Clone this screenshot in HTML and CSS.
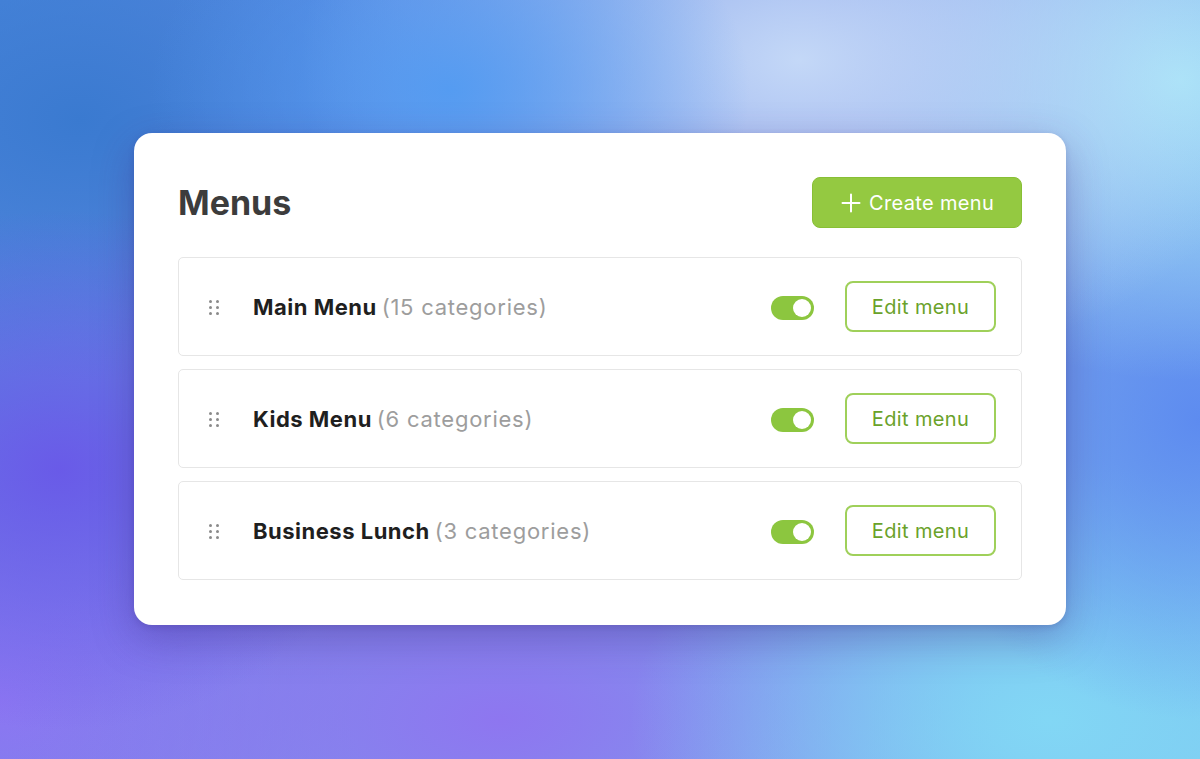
FILE: index.html
```html
<!DOCTYPE html>
<html lang="en">
<head>
<meta charset="utf-8">
<title>Menus</title>
<link rel="stylesheet" href="styles.css">
</head>
<body>
<div class="stage">
  <div class="card">
    <div class="card-header">
      <h1 class="title">Menus</h1>
      <button class="btn-create">
        <svg class="plus" width="20" height="20" viewBox="0 0 20 20"><path d="M10 1.5v17M1.5 10h17" stroke="#fff" stroke-width="2" stroke-linecap="round" fill="none"/></svg>
        <span>Create menu</span>
      </button>
    </div>
    <div class="list">
      <div class="row">
        <span class="handle"><i></i><i></i><i></i><i></i><i></i><i></i></span>
        <span class="name">Main Menu</span><span class="count">(15 categories)</span>
        <span class="toggle"><span class="knob"></span></span>
        <button class="btn-edit">Edit menu</button>
      </div>
      <div class="row">
        <span class="handle"><i></i><i></i><i></i><i></i><i></i><i></i></span>
        <span class="name">Kids Menu</span><span class="count">(6 categories)</span>
        <span class="toggle"><span class="knob"></span></span>
        <button class="btn-edit">Edit menu</button>
      </div>
      <div class="row">
        <span class="handle"><i></i><i></i><i></i><i></i><i></i><i></i></span>
        <span class="name">Business Lunch</span><span class="count">(3 categories)</span>
        <span class="toggle"><span class="knob"></span></span>
        <button class="btn-edit">Edit menu</button>
      </div>
    </div>
  </div>
</div>
</body>
</html>
```

FILE: styles.css
```css
* { box-sizing: border-box; }
html, body { margin: 0; padding: 0; }
body {
  width: 1200px;
  height: 759px;
  overflow: hidden;
  font-family: Inter, "Noto Sans", "Liberation Sans", sans-serif;
}
.stage {
  width: 1200px;
  height: 759px;
  padding-top: 133px;
  padding-left: 134px;
  background:
    radial-gradient(ellipse 320px 260px at 60px 470px, rgba(105,88,232,0.95), rgba(105,88,232,0) 100%),
    radial-gradient(ellipse 300px 220px at 450px 90px, rgba(80,155,242,0.9), rgba(80,155,242,0) 100%),
    radial-gradient(ellipse 500px 320px at 800px 60px, rgba(200,220,248,0.95), rgba(200,220,248,0) 100%),
    radial-gradient(ellipse 360px 300px at 1180px 80px, rgba(165,228,248,1), rgba(165,228,248,0) 100%),
    radial-gradient(ellipse 300px 300px at 1200px 420px, rgba(90,135,240,0.9), rgba(90,135,240,0) 100%),
    radial-gradient(ellipse 420px 260px at 1050px 720px, rgba(130,215,245,1), rgba(130,215,245,0) 100%),
    radial-gradient(ellipse 500px 260px at 500px 720px, rgba(142,118,240,1), rgba(142,118,240,0) 100%),
    radial-gradient(ellipse 360px 300px at 0px 700px, rgba(140,118,242,1), rgba(140,118,242,0) 100%),
    radial-gradient(ellipse 360px 260px at 80px 120px, rgba(58,122,208,1), rgba(58,122,208,0) 100%),
    linear-gradient(135deg, #4a86dc 0%, #7a8ee8 50%, #7cc6f0 100%);
}
.card {
  width: 932px;
  height: 492px;
  background: #fff;
  border-radius: 18px;
  padding: 44px 44px 0 44px;
  box-shadow: 0 14px 40px rgba(60, 40, 130, 0.35), 0 2px 6px rgba(40, 30, 100, 0.15);
}
.card-header {
  display: flex;
  align-items: center;
  justify-content: space-between;
  height: 51px;
  margin-bottom: 29px;
}
.title {
  margin: 0;
  font-size: 34px;
  font-weight: 700;
  color: #3c3c3c;
  line-height: 1;
  padding-top: 1px;
}
.btn-create {
  display: flex;
  align-items: center;
  gap: 8px;
  width: 210px;
  height: 51px;
  padding: 0 0 0 28px;
  border: 1px solid #88bf35;
  border-radius: 8px;
  background: #94c941;
  color: #fff;
  font-family: inherit;
  font-size: 20px;
  letter-spacing: 0.35px;
  font-weight: 400;
}
.plus { flex: none; }
.list {
  display: flex;
  flex-direction: column;
  gap: 13px;
}
.row {
  display: flex;
  align-items: center;
  height: 99px;
  border: 1.5px solid #e6e6e6;
  border-radius: 5px;
  padding: 0 25px 0 30px;
}
.handle {
  display: grid;
  grid-template-columns: 3px 3px;
  column-gap: 4px;
  row-gap: 3px;
  width: 10px;
  margin-right: 34px;
  margin-top: 2px;
}
.handle i {
  display: block;
  width: 3px;
  height: 3px;
  border-radius: 50%;
  background: #8a8a8a;
}
.name {
  font-size: 22px;
  font-weight: 700;
  letter-spacing: 0.5px;
  color: #1f1f1f;
  margin-right: 5px;
}
.count {
  font-size: 22px;
  font-weight: 400;
  letter-spacing: 0.75px;
  color: #9d9d9d;
  flex: 1;
}
.toggle {
  position: relative;
  width: 43px;
  height: 24px;
  border-radius: 12px;
  background: #8cc63f;
  margin-right: 31px;
  margin-top: 2px;
}
.knob {
  position: absolute;
  top: 3px;
  right: 3px;
  width: 18px;
  height: 18px;
  border-radius: 50%;
  background: #fff;
}
.btn-edit {
  width: 151px;
  height: 51px;
  border: 2px solid #9fd05a;
  border-radius: 8px;
  background: #fff;
  color: #6aa22a;
  font-family: inherit;
  font-size: 20px;
  letter-spacing: 0.35px;
  font-weight: 400;
}
```
